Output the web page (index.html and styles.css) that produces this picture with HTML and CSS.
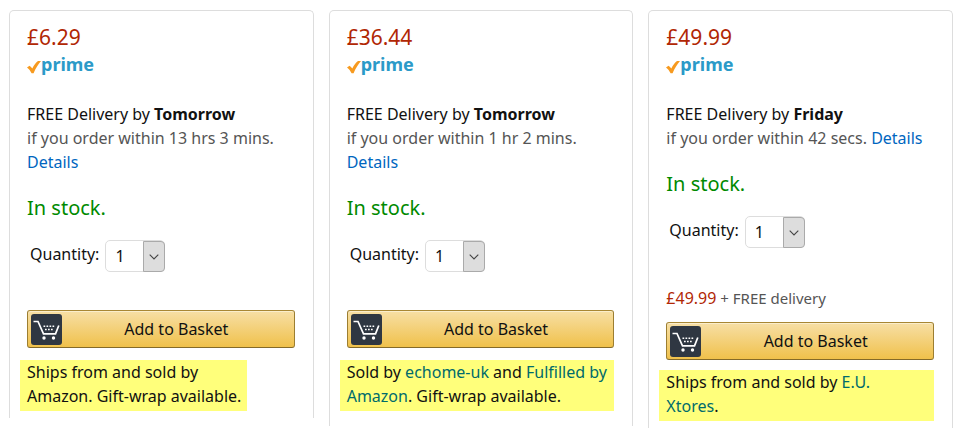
FILE: index.html
```html
<!DOCTYPE html>
<html lang="en">
<head>
    <meta charset="UTF-8">
    <meta name="viewport" content="width=device-width, initial-scale=1.0">
    <title>Buying options</title>
    <link rel="stylesheet" href="styles.css">
</head>
<body>
    <!-- Shared icons -->
    <svg class="sprites" aria-hidden="true">
        <symbol id="check" viewBox="0 0 14 14">
            <path d="M0 7.500L2.500 5.800C3.600 6.500 4.500 7.400 5.300 8.500C7 5 9 2.500 11 1L14 1C11 4.500 8.500 8.500 6.600 13.300L4.600 13.300C3.500 11 2 9 0 7.500Z" fill="#f79a1f"/>
        </symbol>
        <symbol id="cart" viewBox="0 0 31 31">
            <path d="M2.500 7.500H7L12.500 19.800H24.500L27.800 11.500" fill="none" stroke="#fff" stroke-width="1.700"/>
            <path d="M12.500 12.300h1.700m1.300 0h1.700m1.300 0h1.700m1.300 0h1.700M14 15.500h1.700m1.300 0h1.700m1.300 0h1.700" fill="none" stroke="#fff" stroke-width="1.500"/>
            <circle cx="13" cy="24" r="1.700" fill="#fff"/>
            <circle cx="22.500" cy="24" r="1.700" fill="#fff"/>
        </symbol>
        <symbol id="arrow" viewBox="0 0 10 6">
            <path d="M0.700 0.700L5 5L9.300 0.700" fill="none" stroke="#444" stroke-width="1.100"/>
        </symbol>
    </svg>

    <main class="offers">
        <section class="card">
            <div class="price">£6.29</div>
            <div class="prime"><svg class="check"><use href="#check"/></svg><span>prime</span></div>
            <p class="delivery">
                <span class="free">FREE Delivery by <strong>Tomorrow</strong></span><br>
                if you order within 13 hrs 3 mins.<br>
                <a href="#">Details</a>
            </p>
            <div class="stock">In stock.</div>
            <div class="quantity">
                <label for="qty-1">Quantity:</label>
                <div class="select">
                    <select id="qty-1"><option>1</option><option>2</option><option>3</option></select>
                    <span class="arrow"><svg><use href="#arrow"/></svg></span>
                </div>
            </div>
            <button class="basket" type="button">
                <span class="cart"><svg><use href="#cart"/></svg></span>
                <span class="basket-text">Add to Basket</span>
            </button>
            <p class="seller seller-fit">Ships from and sold by<br>Amazon. Gift-wrap available.</p>
        </section>

        <section class="card card-long">
            <div class="price">£36.44</div>
            <div class="prime"><svg class="check"><use href="#check"/></svg><span>prime</span></div>
            <p class="delivery">
                <span class="free">FREE Delivery by <strong>Tomorrow</strong></span><br>
                if you order within 1 hr 2 mins.<br>
                <a href="#">Details</a>
            </p>
            <div class="stock">In stock.</div>
            <div class="quantity">
                <label for="qty-2">Quantity:</label>
                <div class="select">
                    <select id="qty-2"><option>1</option><option>2</option><option>3</option></select>
                    <span class="arrow"><svg><use href="#arrow"/></svg></span>
                </div>
            </div>
            <button class="basket" type="button">
                <span class="cart"><svg><use href="#cart"/></svg></span>
                <span class="basket-text">Add to Basket</span>
            </button>
            <p class="seller">Sold by <a href="#">echome-uk</a> and <a href="#">Fulfilled by<br>Amazon</a>. Gift-wrap available.</p>
        </section>

        <section class="card">
            <div class="price">£49.99</div>
            <div class="prime"><svg class="check"><use href="#check"/></svg><span>prime</span></div>
            <p class="delivery">
                <span class="free">FREE Delivery by <strong>Friday</strong></span><br>
                if you order within 42 secs. <a href="#">Details</a>
            </p>
            <div class="stock">In stock.</div>
            <div class="quantity">
                <label for="qty-3">Quantity:</label>
                <div class="select">
                    <select id="qty-3"><option>1</option><option>2</option><option>3</option></select>
                    <span class="arrow"><svg><use href="#arrow"/></svg></span>
                </div>
            </div>
            <div class="total"><span class="amount">£49.99</span> + FREE delivery</div>
            <button class="basket" type="button">
                <span class="cart"><svg><use href="#cart"/></svg></span>
                <span class="basket-text">Add to Basket</span>
            </button>
            <p class="seller">Ships from and sold by <a href="#">E.U.<br>Xtores</a>.</p>
        </section>
    </main>
</body>
</html>
```

FILE: styles.css
```css
* {
    box-sizing: border-box;
}
body {
    margin: 0;
    background: #fff;
    color: #111;
    font-family: "Noto Sans", sans-serif;
    font-size: 16px;
    line-height: 24px;
}
p {
    margin: 0;
}
a {
    color: #0066c0;
    text-decoration: none;
}
a:hover {
    text-decoration: underline;
}
.sprites {
    position: absolute;
    width: 0;
    height: 0;
}
.offers {
    display: flex;
    align-items: flex-start;
    gap: 15px;
    padding: 10px 10px 0 9px;
}
.card {
    flex: 1;
    min-width: 0;
    padding: 11px 18px 7px 17px;
    border: 1px solid #ddd;
    border-bottom: none;
    border-radius: 5px 5px 0 0;
}
.card-long {
    padding-bottom: 15px;
}
.price {
    color: #b12704;
    font-size: 21px;
    line-height: 30px;
}
.prime {
    display: flex;
    align-items: center;
    height: 24px;
    color: #2b9ac8;
    font-size: 18px;
    font-weight: bold;
}
.check {
    width: 14px;
    height: 14px;
    margin-top: 6px;
}
.delivery {
    margin-top: 26px;
    color: #555;
}
.free {
    color: #111;
}
.stock {
    margin-top: 19px;
    color: #008a00;
    font-size: 20px;
    line-height: 30px;
}
.quantity {
    display: flex;
    gap: 6px;
    margin: 17px 0 38px;
    padding-left: 3px;
}
.quantity label {
    padding-top: 2px;
}
.select {
    position: relative;
    width: 60px;
    height: 32px;
}
.select select {
    width: 100%;
    height: 100%;
    padding: 0 0 0 9px;
    appearance: none;
    background: #fff;
    border: 1px solid #ddd;
    border-radius: 5px;
    color: #111;
    font: inherit;
}
.arrow {
    position: absolute;
    top: 1px;
    right: 0;
    display: flex;
    align-items: center;
    justify-content: center;
    width: 22px;
    height: 31px;
    background: #ddd;
    border: 1px solid #aaa;
    border-radius: 0 4px 4px 0;
    pointer-events: none;
}
.arrow svg {
    width: 10px;
    height: 6px;
}
.total {
    margin-bottom: 12px;
    color: #555;
    font-size: 15px;
}
.amount {
    color: #b12704;
    font-size: 16px;
}
.basket {
    display: flex;
    align-items: center;
    width: 100%;
    height: 38px;
    padding: 0 3px;
    background: linear-gradient(#f7dfa5, #f0c14b);
    border: 1px solid;
    border-color: #a88734 #9c7e31 #846a29;
    border-radius: 3px;
    box-shadow: inset 0 1px 0 #fbeecb;
    color: #111;
    font: inherit;
    cursor: pointer;
}
.basket:hover {
    background: linear-gradient(#f5d78e, #eeb933);
}
.cart {
    width: 31px;
    height: 31px;
    background: #2f3742;
    border-radius: 3px;
}
.cart svg {
    display: block;
    width: 31px;
    height: 31px;
}
.basket-text {
    flex: 1;
    text-align: center;
}
.seller {
    margin: 12px 0 0 -7px;
    padding: 0 0 3px 7px;
    background: #ffff7b;
    white-space: nowrap;
}
.seller-fit {
    width: fit-content;
    padding-right: 6px;
}
.seller a {
    color: #006b6b;
}
.total ~ .seller {
    margin-top: 10px;
}
```
